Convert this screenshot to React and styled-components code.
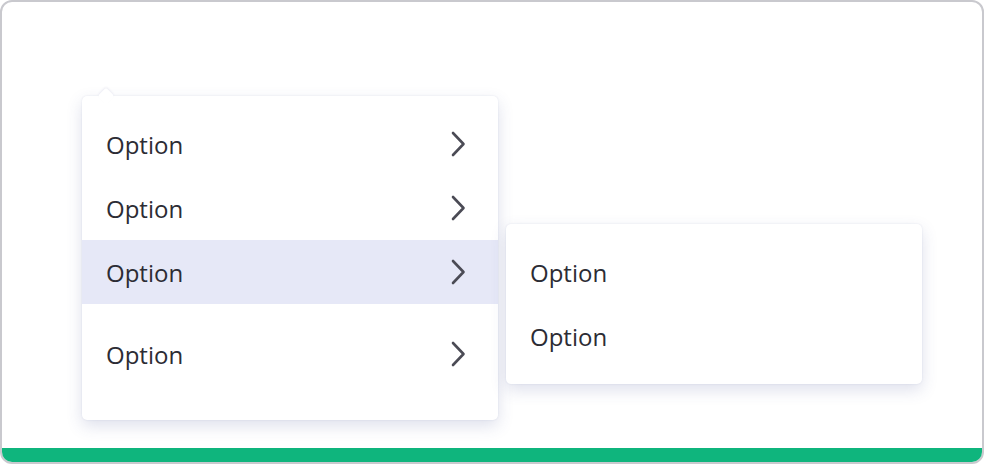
import React from "react";
import styled, { createGlobalStyle } from "styled-components";

const Global = createGlobalStyle`
  html, body { margin: 0; padding: 0; background: #ffffff; }
  body { font-family: "Open Sans", "Noto Sans", sans-serif; }
  * { box-sizing: border-box; }
`;

const Frame = styled.div`
  width: 984px;
  height: 464px;
  border: 2px solid #c9c9ce;
  border-radius: 12px;
  overflow: hidden;
  display: flex;
  flex-direction: column;
  background: #fff;
`;

const Stage = styled.div`
  flex: 1;
  display: flex;
  align-items: flex-start;
  gap: 8px;
  padding: 94px 0 0 80px;
`;

const Bar = styled.div`
  height: 14px;
  background: #0fb57d;
`;

const Menu = styled.div`
  position: relative;
  width: 416px;
  background: #fff;
  border-radius: 5px;
  box-shadow: 0 6px 16px rgba(60, 70, 140, 0.17), 0 0 2px rgba(60, 70, 140, 0.12);
  padding: ${(p) => p.$pad};
  margin-top: ${(p) => p.$top || 0}px;
`;

const Nub = styled.div`
  position: absolute;
  left: 18px;
  top: -6px;
  width: 12px;
  height: 12px;
  background: #fff;
  border-radius: 3px;
  transform: rotate(45deg);
  box-shadow: -1px -1px 2px rgba(60, 70, 140, 0.08);
`;

const Item = styled.div`
  height: 64px;
  display: flex;
  align-items: center;
  justify-content: space-between;
  padding: 1px 32px 0 24px;
  font-size: 24px;
  color: #2c2c34;
  background: ${(p) => (p.$active ? "#e6e8f7" : "transparent")};
  margin-top: ${(p) => p.$gap || 0}px;
`;

const ChevronIcon = styled.svg`
  margin-top: -1px;
  flex-shrink: 0;
`;

const Chevron = () => (
  <ChevronIcon width="16" height="26" viewBox="0 0 16 26" fill="none">
    <path d="M3 2 L13.5 13 L3 24" stroke="#4b4b55" strokeWidth="2.6" strokeLinecap="round" strokeLinejoin="round" />
  </ChevronIcon>
);

export default function App() {
  return (
    <>
      <Global />
      <Frame>
        <Stage>
          <Menu $pad="16px 0 34px">
            <Nub />
            <Item>Option<Chevron /></Item>
            <Item>Option<Chevron /></Item>
            <Item $active>Option<Chevron /></Item>
            <Item $gap={18}>Option<Chevron /></Item>
          </Menu>
          <Menu $pad="16px 0" $top={128}>
            <Item>Option</Item>
            <Item>Option</Item>
          </Menu>
        </Stage>
        <Bar />
      </Frame>
    </>
  );
}
